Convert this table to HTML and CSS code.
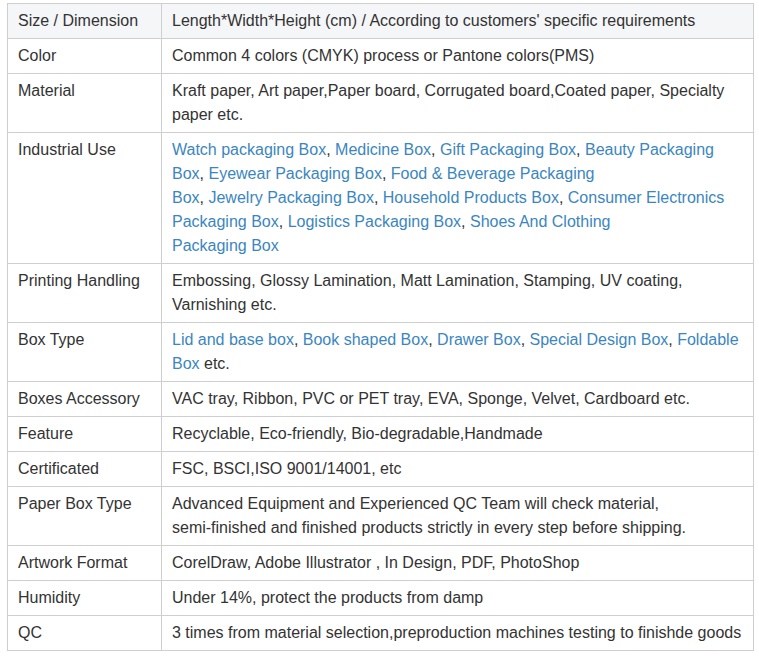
FILE: index.html
```html
<!DOCTYPE html>
<html lang="en">
<head>
<meta charset="utf-8">
<title>Specifications</title>
<link rel="stylesheet" href="styles.css">
</head>
<body>
<table class="spec">
  <colgroup><col class="c1"><col class="c2"></colgroup>
  <tbody>
    <tr class="head"><td>Size / Dimension</td><td>Length*Width*Height (cm) / According to customers' specific requirements</td></tr>
    <tr><td>Color</td><td>Common 4 colors (CMYK) process or Pantone colors(PMS)</td></tr>
    <tr><td>Material</td><td>Kraft paper, Art paper,Paper board, Corrugated board,Coated paper, Specialty paper etc.</td></tr>
    <tr><td>Industrial Use</td><td><a href="#">Watch packaging Box</a>, <a href="#">Medicine Box</a>, <a href="#">Gift Packaging Box</a>, <a href="#">Beauty Packaging Box</a>, <a href="#">Eyewear Packaging Box</a>, <a href="#">Food &amp; Beverage Packaging</a><br><a href="#">Box</a>, <a href="#">Jewelry Packaging Box</a>, <a href="#">Household Products Box</a>, <a href="#">Consumer Electronics Packaging Box</a>, <a href="#">Logistics Packaging Box</a>, <a href="#">Shoes And Clothing</a><br><a href="#">Packaging Box</a></td></tr>
    <tr><td>Printing Handling</td><td>Embossing, Glossy Lamination, Matt Lamination, Stamping, UV coating, Varnishing etc.</td></tr>
    <tr><td>Box Type</td><td><a href="#">Lid and base box</a>, <a href="#">Book shaped Box</a>, <a href="#">Drawer Box</a>, <a href="#">Special Design Box</a>, <a href="#">Foldable Box</a> etc.</td></tr>
    <tr><td>Boxes Accessory</td><td>VAC tray, Ribbon, PVC or PET tray, EVA, Sponge, Velvet, Cardboard etc.</td></tr>
    <tr><td>Feature</td><td>Recyclable, Eco-friendly, Bio-degradable,Handmade</td></tr>
    <tr><td>Certificated</td><td>FSC, BSCI,ISO 9001/14001, etc</td></tr>
    <tr><td>Paper Box Type</td><td>Advanced Equipment and Experienced QC Team will check material, <span class="nowrap">semi-finished</span> and finished products strictly in every step before shipping.</td></tr>
    <tr><td>Artwork Format</td><td>CorelDraw, Adobe Illustrator , In Design, PDF, PhotoShop</td></tr>
    <tr><td>Humidity</td><td>Under 14%, protect the products from damp</td></tr>
    <tr><td>QC</td><td>3 times from material selection,preproduction machines testing to finishde goods</td></tr>
  </tbody>
</table>
</body>
</html>
```

FILE: styles.css
```css
html, body {
  margin: 0;
  padding: 0;
  background: #ffffff;
}

body {
  font-family: "Liberation Sans", Arial, sans-serif;
  font-size: 16px;
  color: #333333;
}

.spec {
  margin: 3px 0 0 7px;
  width: 747px;
  border-collapse: collapse;
  table-layout: fixed;
}

.spec .c1 {
  width: 154px;
}

.spec td {
  border: 1px solid #cfcfcf;
  padding: 5px 10px 5px 10px;
  line-height: 24px;
  vertical-align: top;
  text-align: left;
}

.spec .head td {
  background: #f5f6f8;
}

.spec a {
  color: #3b86bf;
  text-decoration: none;
}

.nowrap {
  white-space: nowrap;
}
```
